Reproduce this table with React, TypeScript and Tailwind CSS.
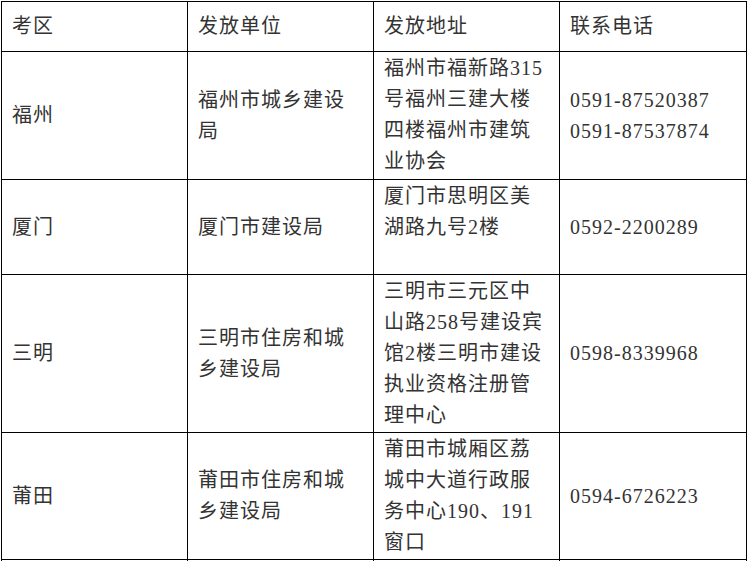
const rows = [
  {
    area: '福州',
    unit: '福州市城乡建设局',
    address: '福州市福新路315号福州三建大楼四楼福州市建筑业协会',
    phones: ['0591-87520387', '0591-87537874'],
    height: 'h-[128px]',
  },
  {
    area: '厦门',
    unit: '厦门市建设局',
    address: '厦门市思明区美湖路九号2楼',
    phones: ['0592-2200289'],
    height: 'h-[95px]',
  },
  {
    area: '三明',
    unit: '三明市住房和城乡建设局',
    address: '三明市三元区中山路258号建设宾馆2楼三明市建设执业资格注册管理中心',
    phones: ['0598-8339968'],
    height: 'h-[157px]',
  },
  {
    area: '莆田',
    unit: '莆田市住房和城乡建设局',
    address: '莆田市城厢区荔城中大道行政服务中心190、191窗口',
    phones: ['0594-6726223'],
    height: 'h-[124px]',
  },
];

const cell = 'border border-black px-[10px] pt-px pb-px';

export default function App() {
  return (
    <div className="min-h-screen bg-white pl-px pt-px">
      <table
        className="w-[745px] table-fixed border-collapse text-[20px] leading-[31px] tracking-[1px] text-[#333]"
        style={{ fontFamily: '"Liberation Serif", "Noto Sans CJK SC", serif' }}
      >
        <colgroup>
          <col className="w-[186px]" />
          <col className="w-[186px]" />
          <col className="w-[186px]" />
          <col className="w-[187px]" />
        </colgroup>
        <thead>
          <tr className="h-[50px]">
            <th className={`${cell} text-left align-middle font-normal`}>考区</th>
            <th className={`${cell} text-left align-middle font-normal`}>发放单位</th>
            <th className={`${cell} text-left align-middle font-normal`}>发放地址</th>
            <th className={`${cell} text-left align-middle font-normal`}>联系电话</th>
          </tr>
        </thead>
        <tbody>
          {rows.map((r) => (
            <tr key={r.area} className={r.height}>
              <td className={`${cell} align-middle`}>{r.area}</td>
              <td className={`${cell} align-middle`}>{r.unit}</td>
              <td className={`${cell} align-top`}>{r.address}</td>
              <td className={`${cell} align-middle`}>
                {r.phones.map((p) => (
                  <div key={p}>{p}</div>
                ))}
              </td>
            </tr>
          ))}
          <tr className="h-[40px]">
            <td className={cell}></td>
            <td className={cell}></td>
            <td className={cell}></td>
            <td className={cell}></td>
          </tr>
        </tbody>
      </table>
    </div>
  );
}
